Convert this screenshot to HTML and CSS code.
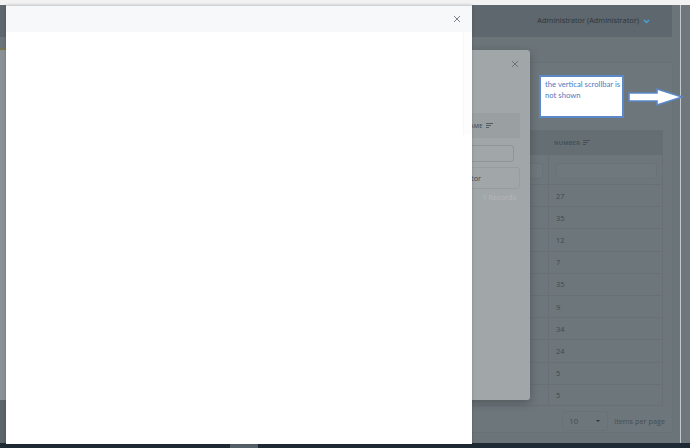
FILE: index.html
```html
<!DOCTYPE html>
<html>
<head>
<meta charset="utf-8">
<title>Modal</title>
<link rel="stylesheet" href="styles.css">
</head>
<body>
<div class="screen">
  <div class="chrome"></div>
  <div class="workspace">
    <div class="app">
      <header class="topbar">
        <span class="user">Administrator (Administrator)</span>
        <svg class="chev" width="7" height="5" viewBox="0 0 7 5"><path d="M1 1 L3.5 3.6 L6 1" fill="none" stroke="#4aa3d8" stroke-width="1.4"/></svg>
      </header>
      <div class="app-body">
        <aside class="sidebar">
          <div class="side-menu"></div>
          <div class="side-foot"></div>
        </aside>
        <main class="main">
          <section class="card">
            <div class="grid-table">
              <div class="th">USER NAME</div>
              <div class="th th-last">NUMBER <svg width="7" height="5" viewBox="0 0 7 5"><path d="M0 .5H7M0 2.5H5M0 4.5H3" stroke="#454e54" stroke-width=".9"/></svg></div>
              <div class="tf"><span class="fin"></span></div>
              <div class="tf tf-last"><span class="fin"></span></div>
              <div class="td"></div><div class="td td-last">27</div>
              <div class="td"></div><div class="td td-last">35</div>
              <div class="td"></div><div class="td td-last">12</div>
              <div class="td"></div><div class="td td-last">7</div>
              <div class="td"></div><div class="td td-last">35</div>
              <div class="td"></div><div class="td td-last">9</div>
              <div class="td"></div><div class="td td-last">34</div>
              <div class="td"></div><div class="td td-last">24</div>
              <div class="td"></div><div class="td td-last">5</div>
              <div class="td"></div><div class="td td-last">5</div>
            </div>
            <div class="pager">
              <div class="pagesize"><span>10</span><span class="caret"></span></div>
              <span class="pager-label">items per page</span>
            </div>
          </section>
        </main>
      </div>
    </div>
    <div class="edge"></div>
    <div class="beyond"></div>
  </div>
  <div class="taskbar"><span class="task"></span></div>

  <div class="modal-back">
    <div class="mb-head">
      <svg width="8" height="8" viewBox="0 0 8 8"><path d="M1 1L7 7M7 1L1 7" stroke="#6b7277" stroke-width="1"/></svg>
    </div>
    <div class="mb-body">
      <div class="mb-grid">
        <div class="mb-th"></div>
        <div class="mb-th mb-th-name">NAME <svg width="7" height="5" viewBox="0 0 7 5"><path d="M0 .5H7M0 2.5H5M0 4.5H3" stroke="#4d5559" stroke-width=".9"/></svg></div>
        <div class="mb-tf"><span class="mb-fin"></span></div>
        <div class="mb-tf"><span class="mb-fin"></span></div>
      </div>
      <div class="mb-row">
        <span class="mb-cell"></span>
        <span class="mb-cell mb-cell-name">Administrator</span>
      </div>
      <div class="mb-count">1 Records</div>
    </div>
  </div>

  <div class="modal-front">
    <div class="mf-head">
      <svg width="8" height="8" viewBox="0 0 8 8"><path d="M1 1L7 7M7 1L1 7" stroke="#7b8187" stroke-width="1"/></svg>
    </div>
    <div class="mf-body">
      <div class="scroll-edge"></div>
    </div>
  </div>

  <div class="note">the vertical scrollbar is<br>not shown</div>
  <svg class="arrow" width="60" height="22" viewBox="0 0 60 22"><polygon points="3,7 31,7 31,3 56,11 31,19 31,15 3,15" fill="#ffffff" stroke="#5b88c9" stroke-width="1.6" stroke-linejoin="miter"/></svg>
</div>
</body>
</html>
```

FILE: styles.css
```css
* { box-sizing: border-box; }
html, body { margin: 0; padding: 0; }
body {
  width: 690px;
  height: 448px;
  overflow: hidden;
  background: #f2f2f2;
  font-family: "Open Sans", "DejaVu Sans", sans-serif;
}
.screen {
  position: relative;
  width: 690px;
  height: 448px;
  display: flex;
  flex-direction: column;
}
.chrome { height: 5px; flex: none; background: #f2f2f2; }
.workspace { height: 438px; flex: none; display: flex; }
.app {
  width: 680px;
  flex: none;
  background: #6b7479;
  display: flex;
  flex-direction: column;
}
.topbar {
  height: 32px;
  flex: none;
  margin-right: 8px;
  background: #5e676d;
  display: flex;
  align-items: center;
  justify-content: flex-end;
  gap: 4px;
  padding-right: 22px;
}
.user { font-size: 7.4px; color: #2c353b; line-height: 1; }
.chev { display: block; }
.app-body { flex: 1; display: flex; min-height: 0; }
.sidebar {
  width: 190px;
  flex: none;
  display: flex;
  flex-direction: column;
  padding-top: 11px;
}
.side-menu { height: 352px; flex: none; border-top: 2px solid #77764f; background: #8b9094; }
.side-foot { flex: 1; background: #5c656a; }
.main { flex: 1; padding: 25px 7px 10px 20px; }
.card {
  height: 100%;
  border: 1px solid #687176;
  background: #6d767b;
  padding: 67px 9px 0 10px;
}
.grid-table { display: grid; grid-template-columns: 1fr 115px; }
.th {
  height: 25px;
  background: #656e73;
  display: flex;
  align-items: center;
  gap: 3px;
  padding-left: 7px;
  font-size: 5.8px;
  font-weight: 600;
  letter-spacing: .2px;
  color: #424b51;
}
.th-last { padding-left: 6px; }
.tf { height: 29px; padding: 8px 5px 5px 7px; }
.tf-last { border-left: 1px solid #687075; border-right: 1px solid #687075; }
.fin {
  display: block;
  height: 16px;
  border: 1px solid #697277;
  border-radius: 3px;
  background: #6f787d;
}
.td {
  height: 22.2px;
  border-top: 1px solid #687075;
  display: flex;
  align-items: center;
  padding-left: 7px;
  font-size: 7.4px;
  color: #40494f;
}
.td-last { border-left: 1px solid #687075; border-right: 1px solid #687075; }
.grid-table > .td:nth-last-child(-n+2) { border-bottom: 1px solid #687075; }
.pager {
  display: flex;
  justify-content: flex-end;
  align-items: center;
  gap: 6px;
  padding-top: 5px;
  margin-right: -2px;
}
.pagesize {
  width: 46px;
  height: 20px;
  border: 1px solid #697277;
  border-radius: 3px;
  display: flex;
  align-items: center;
  justify-content: space-between;
  padding: 0 7px 0 6px;
  font-size: 7.8px;
  color: #454d53;
}
.caret {
  width: 0;
  height: 0;
  border-left: 2px solid transparent;
  border-right: 2px solid transparent;
  border-top: 2.5px solid #2e363b;
}
.pager-label { font-size: 7.3px; color: #454e54; }
.edge { width: 1px; flex: none; background: #c3c8cb; }
.beyond { flex: 1; background: #6f777c; }
.taskbar { height: 5px; flex: none; background: #1e2a34; display: flex; }
.task { margin-left: 230px; width: 28px; background: #56616a; }

/* back (dimmed) dialog */
.modal-back {
  position: absolute;
  left: 300px;
  top: 50px;
  width: 230px;
  height: 350px;
  background: #a1a6a9;
  border-radius: 3px;
  box-shadow: 0 3px 10px rgba(0, 0, 0, .25);
}
.mb-head {
  height: 28px;
  display: flex;
  align-items: center;
  justify-content: flex-end;
  padding-right: 11px;
}
.mb-head svg { display: block; }
.mb-body { padding: 35px 10px 0 10px; }
.mb-grid { display: grid; grid-template-columns: 1fr 92px; }
.mb-th { height: 25px; background: #9a9fa2; }
.mb-th-name {
  display: flex;
  align-items: center;
  gap: 3px;
  padding-left: 37px;
  font-size: 5.8px;
  font-weight: 600;
  letter-spacing: .2px;
  color: #4d5559;
}
.mb-tf { height: 29px; padding: 7px 6px 5px 6px; }
.mb-fin {
  display: block;
  height: 17px;
  border: 1px solid #8f9497;
  border-radius: 3px;
}
.mb-row {
  height: 22px;
  border: 1px solid #979c9f;
  border-radius: 3px;
  display: grid;
  grid-template-columns: 1fr 92px;
  align-items: center;
}
.mb-cell-name { padding-left: 7px; font-size: 7.3px; color: #3e464b; }
.mb-count {
  margin-top: 2px;
  line-height: 12px;
  text-align: right;
  padding-right: 4px;
  font-size: 7.3px;
  color: #b3b7ba;
}

/* front (white) dialog */
.modal-front {
  position: absolute;
  left: 6px;
  top: 5px;
  width: 466px;
  height: 439px;
  background: #ffffff;
  border-top: 1px solid #d0d4d7;
  box-shadow: 0 0 3px rgba(0, 0, 0, .2);
  display: flex;
  flex-direction: column;
}
.mf-head {
  height: 26px;
  flex: none;
  background: #f7f8fa;
  display: flex;
  align-items: center;
  justify-content: flex-end;
  padding-right: 11px;
}
.mf-head svg { display: block; }
.mf-body { flex: 1; display: flex; justify-content: flex-end; align-items: flex-start; }
.scroll-edge {
  width: 9px;
  height: 103px;
  border-left: 1px solid #f6f7f8;
  background: #fdfdfd;
}

/* annotation */
.note {
  position: absolute;
  left: 539px;
  top: 75px;
  width: 85px;
  height: 43px;
  background: #ffffff;
  border: 2px solid #5b88c9;
  padding: 2px 4px;
  font-family: Lato, "Open Sans", sans-serif;
  font-size: 7.7px;
  line-height: 11px;
  color: #4b7cc2;
  white-space: nowrap;
}
.arrow {
  position: absolute;
  left: 626px;
  top: 86px;
  display: block;
}
```
